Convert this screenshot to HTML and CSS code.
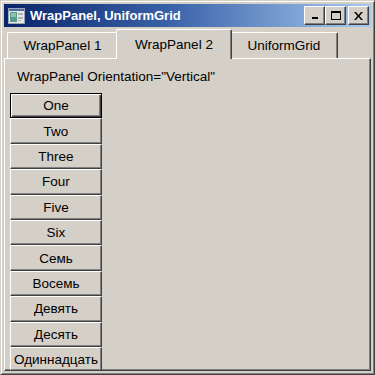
FILE: index.html
```html
<!DOCTYPE html>
<html>
<head>
<meta charset="utf-8">
<link rel="stylesheet" href="styles.css">
</head>
<body>
<div class="window">
  <div class="titlebar">
    <svg class="appicon" width="17" height="16" viewBox="0 0 17 16">
      <rect x="0.5" y="0.5" width="16" height="15" fill="#e8e8e8" stroke="#9aa4b0"/>
      <rect x="1" y="1" width="15" height="2" fill="#4a6aa8"/>
      <rect x="2" y="4" width="7" height="10" fill="#5a9a8a"/>
      <rect x="3" y="5" width="5" height="4" fill="#8cc4a8"/>
      <rect x="10" y="5" width="5" height="2" fill="#b0b0b0"/>
      <rect x="10" y="9" width="5" height="2" fill="#b0b0b0"/>
      <rect x="10" y="12" width="3" height="1" fill="#b0b0b0"/>
    </svg>
    <span class="title">WrapPanel, UniformGrid</span>
    <div class="capbtns">
      <div class="capbtn"><svg width="8" height="7" viewBox="0 0 8 7"><rect x="1" y="5" width="6" height="2" fill="#000"/></svg></div>
      <div class="capbtn"><svg width="10" height="9" viewBox="0 0 10 9"><rect x="0.5" y="0.5" width="9" height="8" fill="none" stroke="#000"/><rect x="0" y="0" width="10" height="2" fill="#000"/></svg></div>
      <div class="capbtn close"><svg width="9" height="8" viewBox="0 0 9 8"><path d="M0 0h2l2.5 3 2.5-3h2l-3.5 4 3.5 4h-2l-2.5-3-2.5 3h-2l3.5-4z" fill="#000"/></svg></div>
    </div>
  </div>
  <div class="tabs">
    <div class="tab t1">WrapPanel 1</div>
    <div class="tab t2 sel">WrapPanel 2</div>
    <div class="tab t3">UniformGrid</div>
  </div>
  <div class="panel">
    <div class="label">WrapPanel Orientation="Vertical"</div>
    <div class="stack">
      <div class="btn default">One</div>
      <div class="btn">Two</div>
      <div class="btn">Three</div>
      <div class="btn">Four</div>
      <div class="btn">Five</div>
      <div class="btn">Six</div>
      <div class="btn">Семь</div>
      <div class="btn">Восемь</div>
      <div class="btn">Девять</div>
      <div class="btn">Десять</div>
      <div class="btn">Одиннадцать</div>
    </div>
  </div>
</div>
</body>
</html>
```
FILE: styles.css
```css
html, body {
  margin: 0;
  padding: 0;
  background: #d4d0c8;
}
body {
  font-family: "Liberation Sans", Arial, sans-serif;
  font-size: 13.5px;
  color: #000;
}
.window {
  box-sizing: border-box;
  width: 375px;
  height: 375px;
  background: #d4d0c8;
  border: 1px solid;
  border-color: #d4d0c8 #404040 #404040 #d4d0c8;
  box-shadow: inset 1px 1px #ffffff, inset -1px -1px #808080;
  padding: 3px;
  display: flex;
  flex-direction: column;
  overflow: hidden;
}
.titlebar {
  height: 23px;
  flex: none;
  background: linear-gradient(to right, #0a246a 0%, #3a62a8 45%, #a6caf0 100%);
  display: flex;
  align-items: center;
  padding-left: 4px;
}
.appicon {
  flex: none;
  margin-right: 5px;
}
.title {
  color: #fff;
  font-weight: bold;
  font-size: 13px;
  white-space: nowrap;
}
.capbtns {
  margin-left: auto;
  display: flex;
  margin-right: 2px;
}
.capbtn {
  box-sizing: border-box;
  width: 21px;
  height: 19px;
  background: #d4d0c8;
  border: 1px solid;
  border-color: #ffffff #404040 #404040 #ffffff;
  box-shadow: inset -1px -1px #808080;
  display: flex;
  align-items: center;
  justify-content: center;
}
.capbtn.close {
  margin-left: 2px;
}
.tabs {
  height: 31px;
  flex: none;
  display: flex;
  align-items: flex-end;
  padding-left: 3px;
  position: relative;
  z-index: 1;
}
.tab {
  box-sizing: border-box;
  height: 26px;
  background: #d4d0c8;
  border-top: 1px solid #fff;
  border-left: 1px solid #fff;
  border-right: 1px solid #404040;
  box-shadow: inset -1px 0 #808080;
  border-radius: 2px 2px 0 0;
  display: flex;
  align-items: center;
  justify-content: center;
  white-space: nowrap;
}
.t1 { width: 111px; }
.t2 { width: 116px; }
.t3 { width: 108px; }
.tab.sel {
  height: 30px;
  margin: 0 -2px -1px -2px;
  padding-bottom: 1px;
  position: relative;
  z-index: 2;
}
.panel {
  flex: 1;
  box-sizing: border-box;
  border: 1px solid;
  border-color: #ffffff #404040 #404040 #ffffff;
  box-shadow: inset -1px -1px #808080;
  padding: 10px 0 0 5px;
  overflow: hidden;
  min-height: 0;
}
.label {
  padding-left: 7px;
  height: 20px;
  line-height: 16px;
  margin-bottom: 4px;
}
.stack {
  display: flex;
  flex-direction: column;
  width: 92px;
}
.btn {
  box-sizing: border-box;
  height: 25.4px;
  flex: none;
  border: 1px solid;
  border-color: #ffffff #404040 #404040 #ffffff;
  box-shadow: inset -1px -1px #808080;
  display: flex;
  align-items: center;
  justify-content: center;
  white-space: nowrap;
  overflow: hidden;
}
.btn.default {
  border: 1px solid #000;
  box-shadow: inset 1px 1px #fff, inset -1px -1px #404040, inset -2px -2px #808080;
}
```
